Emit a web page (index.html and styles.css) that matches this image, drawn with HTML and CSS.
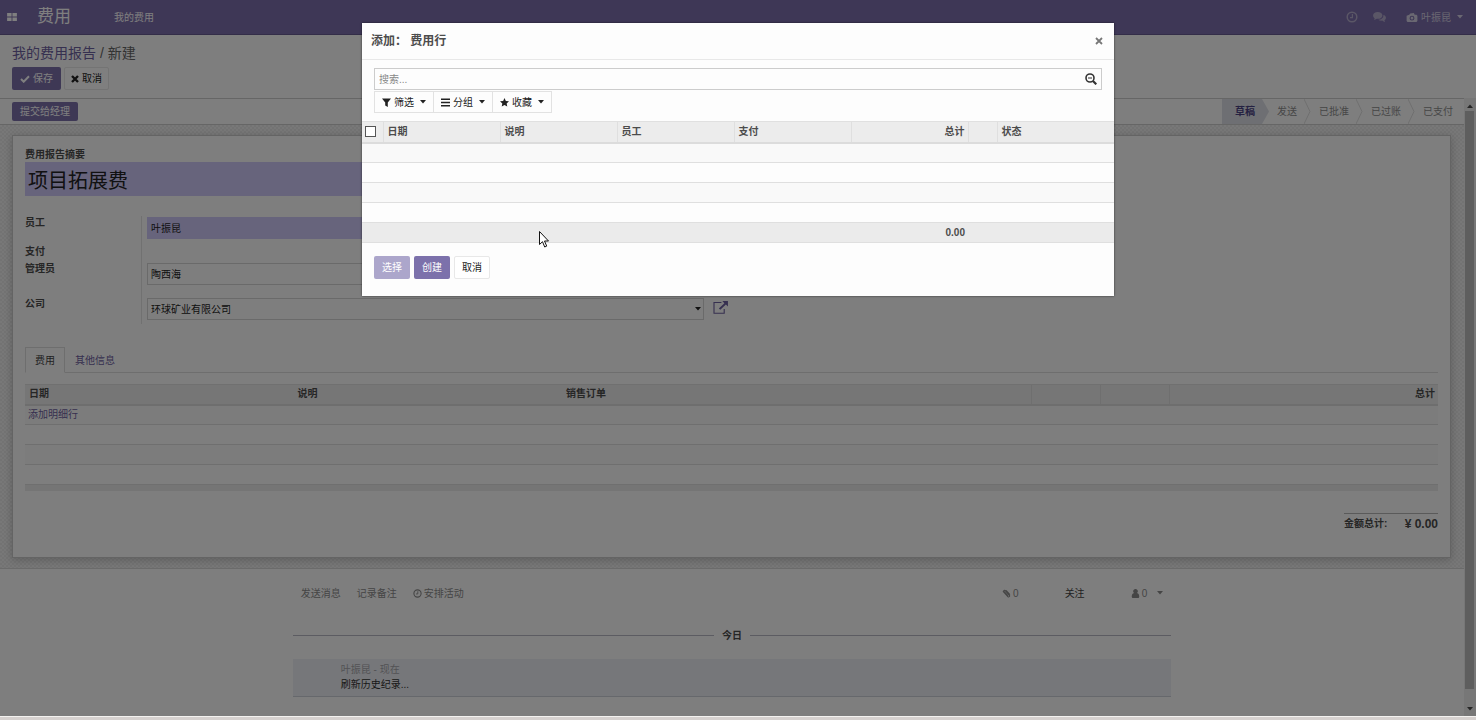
FILE: index.html
```html
<!DOCTYPE html>
<html lang="zh-CN">
<head>
<meta charset="utf-8">
<title>费用</title>
<link rel="stylesheet" href="styles.css">
</head>
<body>
<svg class="defs" aria-hidden="true">
  <symbol id="caret" viewBox="0 0 6 4"><path d="M0 0h6L3 3.5z"/></symbol>
  <symbol id="clock" viewBox="0 0 12 12"><circle cx="6" cy="6" r="4.8" fill="none" stroke="currentColor" stroke-width="1.5"/><path d="M6.4 3v3.6H4" fill="none" stroke="currentColor" stroke-width="1.2"/></symbol>
  <symbol id="external" viewBox="0 0 16 14"><path d="M9 1.600H1v11.600h11V8.500" fill="none" stroke="currentColor" stroke-width="1.2"/><path d="M10 0h6v6l-2.200-2.100-6 5.600-1.600-1.500 6-5.700z"/></symbol>
  <symbol id="chevron" viewBox="0 0 7 25"><path d="M0 0l6 12.500L0 25" fill="none" stroke="currentColor"/></symbol>
</svg>
<div class="app">
  <header class="navbar">
    <button class="apps" aria-label="应用"><svg viewBox="0 0 11 9"><path d="M0 0h5v4H0zM6 0h5v4H6zM0 5h5v4H0zM6 5h5v4H6z"/></svg></button>
    <a class="brand" href="#">费用</a>
    <nav class="menu"><a href="#">我的费用</a></nav>
    <div class="systray">
      <button aria-label="活动"><svg class="ic-clock"><use href="#clock"/></svg></button>
      <button aria-label="消息"><svg class="ic-chat" viewBox="0 0 14 12"><path d="M5 0c3 0 5.200 1.600 5.200 3.700S8 7.400 5 7.400l-1-.1C3 8.100 2 8.500.8 8.600c.5-.5.8-1.100.9-1.900C.6 6 0 5 0 3.700 0 1.600 2.200 0 5 0z"/><path d="M11.200 3c1.700.7 2.800 1.800 2.800 3.200 0 1.200-.6 2-1.600 2.700.1.800.4 1.400.9 1.900-1.300-.1-2.400-.6-3.300-1.400-1.600.2-3.300-.1-4.300-.9 3.200-.2 5.600-2 5.600-4.700z"/></svg></button>
      <button class="user"><svg class="ic-cam" viewBox="0 0 12 10"><path fill-rule="evenodd" d="M0 3l3-1 1-1.500L8 0l1 2h2l1 1v6l-1 1H1L0 9zM6 3a2.700 2.700 0 1 0 0 5.400A2.700 2.700 0 0 0 6 3zm0 1.200a1.500 1.500 0 1 1 0 3 1.500 1.500 0 0 1 0-3z"/></svg>叶振昆<svg class="ic-caret"><use href="#caret"/></svg></button>
    </div>
  </header>

  <section class="control">
    <div class="crumbs"><a href="#">我的费用报告</a> / 新建</div>
    <div class="actions">
      <button class="btn primary"><svg class="ic-check" viewBox="0 0 10 8"><path d="M1 4l2.700 2.700L9 1.300" fill="none" stroke="currentColor" stroke-width="2"/></svg>保存</button>
      <button class="btn plain"><svg class="ic-x" viewBox="0 0 8 8"><path d="M1 1l6 6M7 1L1 7" fill="none" stroke="currentColor" stroke-width="2.400"/></svg>取消</button>
    </div>
  </section>

  <div class="body">
    <main class="content">
      <div class="statusbar">
        <button class="btn primary small">提交给经理</button>
        <ol class="steps">
          <li class="current">草稿<svg class="tip" viewBox="0 0 7 25"><path d="M0 0l7 12.500L0 25z"/></svg></li>
          <li>发送<svg class="arrow"><use href="#chevron"/></svg></li>
          <li>已批准<svg class="arrow"><use href="#chevron"/></svg></li>
          <li>已过账<svg class="arrow"><use href="#chevron"/></svg></li>
          <li>已支付</li>
        </ol>
      </div>
      <div class="sheet-bg">
        <form class="sheet">
          <label class="label" for="summary">费用报告摘要</label>
          <input class="title-input" id="summary" value="项目拓展费">
          <div class="group">
            <label class="label" for="employee">员工</label>
            <div class="field"><span class="pick"><select class="required" id="employee"><option>叶振昆</option></select><svg class="ic-caret"><use href="#caret"/></svg></span><button type="button" class="open" aria-label="打开员工"><svg class="ic-ext"><use href="#external"/></svg></button></div>
            <span class="label">支付</span>
            <div class="field"></div>
            <label class="label" for="manager">管理员</label>
            <div class="field"><span class="pick"><select id="manager"><option>陶西海</option></select><svg class="ic-caret"><use href="#caret"/></svg></span><button type="button" class="open" aria-label="打开管理员"><svg class="ic-ext"><use href="#external"/></svg></button></div>
            <label class="label" for="company">公司</label>
            <div class="field"><span class="pick"><select id="company"><option>环球矿业有限公司</option></select><svg class="ic-caret"><use href="#caret"/></svg></span><button type="button" class="open" aria-label="打开公司"><svg class="ic-ext"><use href="#external"/></svg></button></div>
          </div>
          <div class="tabs"><a class="tab active" href="#">费用</a><a class="tab" href="#">其他信息</a></div>
          <table class="list lines">
            <colgroup><col class="wide"><col class="wide"><col><col class="narrow"><col class="narrow"><col class="wide"></colgroup>
            <thead><tr><th>日期</th><th>说明</th><th>销售订单</th><th class="sep"></th><th class="sep"></th><th class="sep num">总计</th></tr></thead>
            <tbody>
              <tr><td colspan="6"><a href="#">添加明细行</a></td></tr>
              <tr><td colspan="6"></td></tr>
              <tr><td colspan="6"></td></tr>
              <tr><td colspan="6"></td></tr>
            </tbody>
            <tfoot><tr><td colspan="6"></td></tr></tfoot>
          </table>
          <div class="total"><span>金额总计:</span><strong>¥ 0.00</strong></div>
        </form>
      </div>
      <section class="chatter">
        <div class="topbar">
          <button>发送消息</button>
          <button>记录备注</button>
          <button><svg class="ic-small"><use href="#clock"/></svg>安排活动</button>
          <div class="topbar-right">
            <button><svg class="ic-small" viewBox="0 0 10 10"><path d="M1 2.500l5.500 6c1 1 2.600-.4 1.700-1.500L3.400 1.600C2.700.8 1.500 1.900 2.200 2.700l4.500 4.800M4.500 1.500l4.300 4.700" fill="none" stroke="currentColor" stroke-width="1.200"/></svg>0</button>
            <button class="follow">关注</button>
            <button><svg class="ic-small" viewBox="0 0 10 10"><path d="M5 0a2.500 2.500 0 0 1 1.600 4.500C8.500 5 9.200 6.500 9.200 9L8.500 10h-7L.8 9c0-2.500.7-4 2.600-4.500A2.500 2.500 0 0 1 5 0z"/></svg>0<svg class="ic-caret"><use href="#caret"/></svg></button>
          </div>
        </div>
        <div class="day"><span>今日</span></div>
        <article class="message">
          <div class="meta">叶振昆 - 现在</div>
          <div>刷新历史纪录...</div>
        </article>
      </section>
    </main>
    <div class="scrollbar" aria-hidden="true">
      <svg class="ic-caret up"><use href="#caret"/></svg>
      <div class="thumb"></div>
      <svg class="ic-caret"><use href="#caret"/></svg>
    </div>
  </div>

  <div class="backdrop">
    <div class="modal" role="dialog" aria-labelledby="modal-title">
      <div class="modal-head"><h4 id="modal-title">添加： 费用行</h4><button class="close" aria-label="关闭"><svg viewBox="0 0 8 8"><path d="M1 1l6 6M7 1L1 7" fill="none" stroke="currentColor" stroke-width="1.800"/></svg></button></div>
      <div class="search">
        <div class="search-box">
          <input type="text" placeholder="搜索..." aria-label="搜索">
          <button aria-label="高级搜索"><svg viewBox="0 0 12 12"><circle cx="5" cy="5" r="4" fill="none" stroke="currentColor" stroke-width="1.600"/><path d="M3 5h4" stroke="currentColor"/><path d="M8 8l3.300 3.300" stroke="currentColor" stroke-width="2.200"/></svg></button>
        </div>
        <div class="filters">
          <button><svg class="ic-f" viewBox="0 0 9 9"><path d="M0 .5h9L5.800 4.500V9L3.200 7.500v-3z"/></svg>筛选<svg class="ic-caret"><use href="#caret"/></svg></button>
          <button><svg class="ic-f" viewBox="0 0 9 9"><path d="M0 .5h9v1.600H0zM0 3.700h9v1.600H0zM0 6.900h9v1.600H0z"/></svg>分组<svg class="ic-caret"><use href="#caret"/></svg></button>
          <button><svg class="ic-f" viewBox="0 0 10 10"><path d="M5 0l1.500 3.200 3.500.4-2.600 2.400.7 3.500L5 7.800 1.900 9.500 2.600 6 0 3.600l3.500-.4z"/></svg>收藏<svg class="ic-caret"><use href="#caret"/></svg></button>
        </div>
      </div>
      <table class="list picker">
        <colgroup><col class="check"><col class="item"><col class="item"><col class="item"><col class="item"><col class="item"><col class="gap"><col></colgroup>
        <thead><tr><th class="box"><input type="checkbox" aria-label="全选"></th><th class="sep">日期</th><th class="sep">说明</th><th class="sep">员工</th><th class="sep">支付</th><th class="sep num">总计</th><th class="sep"></th><th class="sep">状态</th></tr></thead>
        <tbody>
          <tr><td colspan="8"></td></tr>
          <tr><td colspan="8"></td></tr>
          <tr><td colspan="8"></td></tr>
          <tr><td colspan="8"></td></tr>
        </tbody>
        <tfoot><tr><td colspan="5"></td><td class="num">0.00</td><td></td><td></td></tr></tfoot>
      </table>
      <div class="modal-foot">
        <button class="btn primary" disabled>选择</button>
        <button class="btn primary">创建</button>
        <button class="btn plain">取消</button>
      </div>
    </div>
  </div>
  <svg class="cursor" viewBox="0 0 10 17" aria-hidden="true"><path d="M.5 .5v13l3-2.800 2.200 5.300 2-.9-2.200-5.100h4z" fill="#fff" stroke="#111"/></svg>
</div>
<footer class="edge"></footer>
</body>
</html>
```
FILE: styles.css
```css
* { box-sizing: border-box; }
body {
  margin: 0;
  height: 100vh;
  display: flex;
  flex-direction: column;
  overflow: hidden;
  background: #fdfdfd;
  color: #4c4c4c;
  font: 10px/13px "Liberation Sans", "Noto Sans CJK SC", sans-serif;
}
button, input, select { font: inherit; color: inherit; margin: 0; }
button { border: 0; background: none; padding: 0; display: inline-flex; align-items: center; justify-content: center; }
a { color: #6d60a0; text-decoration: none; }
svg { fill: currentColor; flex: none; display: block; }
.defs { position: absolute; width: 0; height: 0; }
.app { flex: 1; min-height: 0; display: flex; flex-direction: column; position: relative; }
.edge { height: 4px; background: #d6d1cf; border-top: 1px solid #f4f2f0; }
.ic-caret { width: 6px; height: 4px; }
.ic-small { width: 9px; height: 9px; }

.navbar { height: 35px; display: flex; align-items: center; padding: 0 13px 0 7px; background: #7c6eac; border-bottom: 1px solid #665a90; color: #fff; }
.navbar a { color: #fff; }
.apps svg { width: 10px; height: 8px; }
.brand { margin-left: 20px; font-size: 17px; line-height: 24px; }
.menu { margin-left: 43px; }
.systray { margin-left: auto; display: flex; align-items: center; color: #b5adcd; }
.ic-clock { width: 12px; height: 12px; }
.ic-chat { width: 13px; height: 11px; margin: 0 20px 0 15px; }
.ic-cam { width: 12px; height: 9px; margin-right: 3px; }
.user { color: #d5d0e4; }
.user .ic-caret { margin-left: 6px; }

.control { height: 63px; padding: 8px 12px; }
.crumbs { font-size: 14px; line-height: 20px; color: #666; }
.actions { display: flex; gap: 3px; margin-top: 4px; }
.btn { height: 23px; padding: 0 7px; gap: 3px; border: 1px solid transparent; border-radius: 2px; }
.btn.primary { background: #7c71ab; color: #fff; }
.btn.primary:disabled { background: #aca6cb; }
.btn.plain { background: #fff; border-color: #e8e8e8; color: #222; }
.btn.small { height: 19px; }
.control .btn.plain { padding: 0 6px; }
.ic-check { width: 10px; height: 8px; }
.ic-x { width: 8px; height: 8px; }

.body { flex: 1; min-height: 0; display: flex; }
.content { flex: 1; min-width: 0; overflow: hidden; }
.scrollbar { width: 12px; padding: 6px 2px 5px 1px; background: #efefef; display: flex; flex-direction: column; align-items: center; gap: 3px; }
.scrollbar .up { transform: rotate(180deg); }
.scrollbar .thumb { flex: 1; width: 100%; background: #bdbdbd; margin-bottom: 15px; }
.statusbar { height: 27px; display: flex; align-items: center; justify-content: space-between; padding-left: 12px; border-top: 1px solid #ccc; border-bottom: 1px solid #ccc; }
.steps { display: flex; margin: 0; padding: 0; list-style: none; line-height: 25px; color: #8e8e8e; }
.steps li { position: relative; padding: 0 7px 0 15px; }
.steps li:last-child { padding-right: 11px; }
.steps .current { padding-left: 13px; background: #dcdfe6; color: #4b4284; font-weight: bold; }
.steps svg { position: absolute; top: 0; right: -7px; width: 7px; height: 25px; }
.tip { color: #dcdfe6; }
.arrow { color: #dedede; }

.sheet-bg { padding: 10px 13px 10px 12px; border-bottom: 1px solid #d6d6d6; background: repeating-conic-gradient(#e6e6e6 0 25%, #f0f0f0 0 50%) 0 0 / 4px 4px; }
.sheet { padding: 12px 12px 26px; background: #fdfdfd; border: 1px solid #c8c8c8; box-shadow: 0 2px 8px rgba(0, 0, 0, .2); }
.label { font-weight: bold; display: block; }
.title-input { display: block; width: 50%; height: 34px; margin-top: 1px; padding: 0 3px; border: 0; background: #cfc8f8; color: #222; font-size: 20px; }
.group { width: 50%; display: grid; grid-template-columns: 117px 1fr; grid-template-rows: 29px 17px 35px 27px; margin-top: 20px; }
.group .label { border-right: 1px solid #e3e3e3; }
.field { display: flex; align-items: flex-start; padding: 1px 4px 0 5px; color: #222; }
.pick { flex: 1; position: relative; }
.pick select { display: block; width: 100%; height: 22px; padding: 0 3px; border: 1px solid #d4d4d4; border-radius: 0; background: transparent; appearance: none; }
.pick .required { background: #cfc8f8; border-color: #cfc8f8; }
.pick .ic-caret { position: absolute; right: 3px; top: 9px; }
.open { width: 24px; height: 18px; padding-left: 9px; color: #6d60a0; }
.ic-ext { width: 15px; height: 13px; }
.tabs { display: flex; height: 26px; margin-top: 23px; border-bottom: 1px solid #ddd; }
.tab { height: 26px; line-height: 25px; padding: 0 9px; border: 1px solid transparent; }
.tab.active { background: #fdfdfd; border-color: #ddd #ddd #fdfdfd; color: #444; }

.list { width: 100%; table-layout: fixed; border-collapse: collapse; }
.list th { height: 20px; padding: 0 4px; background: #ececec; border-top: 1px solid #e0e0e0; border-bottom: 2px solid #dcdcdc; text-align: left; line-height: 12px; }
.list .sep { border-left: 1px solid #dfdfdf; }
.list .num { text-align: right; padding: 0 3px; }
.list td { height: 20px; padding: 0 3px; border-bottom: 1px solid #dfdfdf; }
.list tbody tr:nth-child(odd) { background: #f9f9f9; }
.list tfoot td { background: #ebebeb; }
.lines { margin-top: 11px; }
.lines .wide { width: 19%; }
.lines .narrow { width: 69px; }
.lines tfoot td { height: 6px; border: 0; }
.total { width: 94px; margin: 22px 0 0 auto; padding-top: 3px; border-top: 1px solid #b5b5b5; display: flex; justify-content: space-between; align-items: center; font-weight: bold; }
.total strong { font-size: 12px; line-height: 14px; }

.chatter { width: 60%; margin: 0 auto; }
.topbar { display: flex; align-items: center; gap: 16px; padding: 18px 8px 0; color: #8b8b8b; }
.topbar button { gap: 2px; }
.topbar-right { margin-left: auto; display: flex; gap: 46px; }
.topbar-right .follow { color: #444; }
.topbar .ic-caret { margin-left: 8px; }
.day { display: flex; align-items: center; gap: 8px; margin-top: 29px; font-weight: bold; }
.day::before, .day::after { content: ""; flex: 1; border-top: 1px solid #b9b9c4; }
.message { margin-top: 17px; padding: 4px 48px; height: 38px; background: #edeff4; border-bottom: 1px solid #cdd0d8; line-height: 16px; color: #333; }
.message .meta { color: #a5a5ab; line-height: 14px; }

.backdrop { position: absolute; inset: 0; background: rgba(0, 0, 0, .5); padding-top: 23px; }
.modal { width: 90%; max-width: 752px; margin: 0 auto; background: #fdfdfd; box-shadow: 0 0 2px rgba(0, 0, 0, .6); }
.modal-head { height: 37px; display: flex; align-items: center; justify-content: space-between; padding: 0 10px 0 9px; border-bottom: 1px solid #e8e8e8; }
.modal-head h4 { margin: 0; font-size: 12px; line-height: 16px; }
.close { width: 10px; height: 10px; color: #777; }
.close svg { width: 8px; height: 8px; }
.search { padding: 8px 12px; }
.search-box { height: 22px; display: flex; align-items: center; border: 1px solid #ccc; padding: 0 4px; }
.search-box input { flex: 1; min-width: 0; height: 20px; padding: 0; border: 0; background: none; outline: 0; }
.search-box input::placeholder { color: #888; }
.search-box svg { width: 12px; height: 12px; color: #333; }
.filters { display: flex; margin-top: 1px; }
.filters button { height: 22px; padding: 0 7px; border: 1px solid #e2e2e2; border-left-width: 0; color: #222; gap: 3px; }
.filters button:first-child { border-left-width: 1px; }
.filters .ic-caret { margin-left: 3px; }
.ic-f { width: 9px; height: 9px; }
.picker .check { width: 21px; }
.picker .item { width: 117px; }
.picker .gap { width: 29px; }
.picker th { height: 21px; }
.picker .box { padding: 0 3px; }
.picker input { display: block; width: 11px; height: 11px; appearance: none; border: 1px solid #555; background: #fff; }
.picker tfoot td { font-weight: bold; }
.modal-foot { display: flex; gap: 4px; padding: 13px 12px 17px; }
.cursor { position: absolute; left: 539px; top: 231px; width: 10px; height: 17px; }
```
